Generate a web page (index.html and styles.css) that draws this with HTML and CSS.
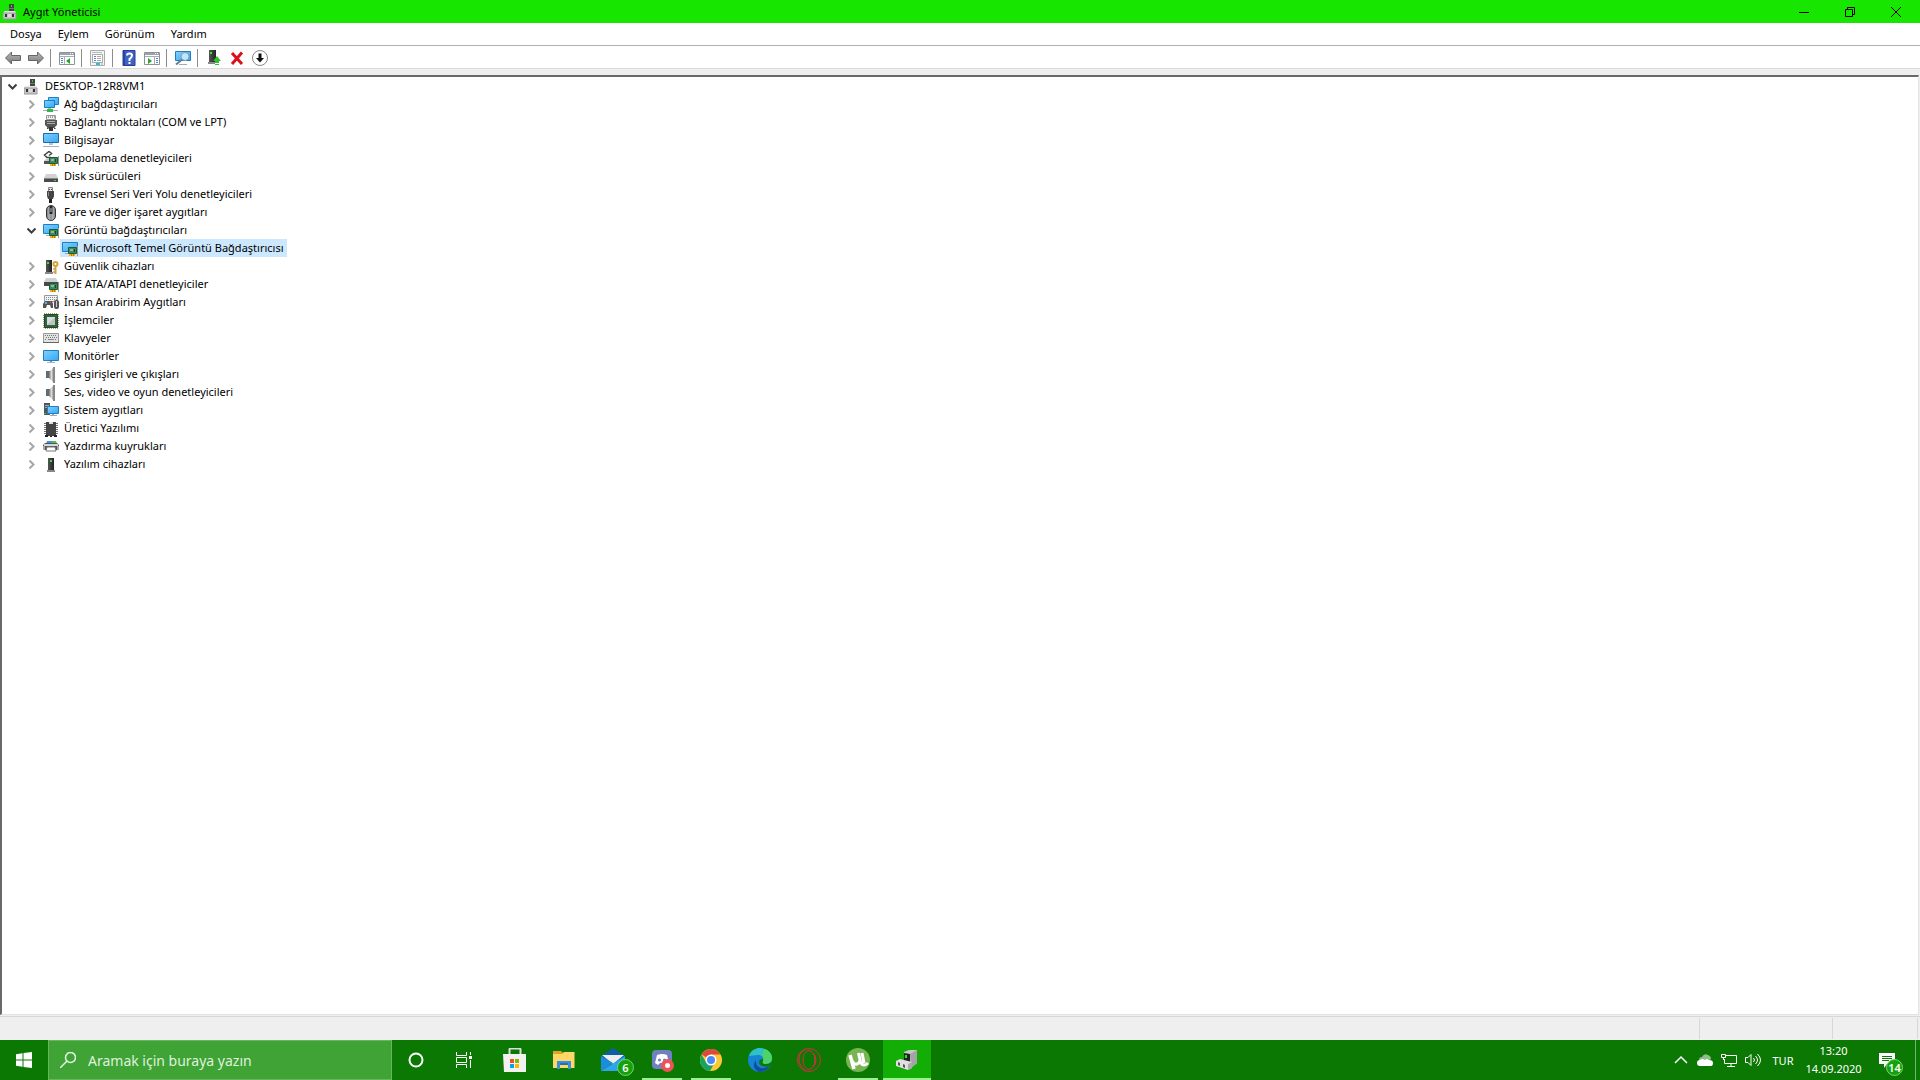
FILE: index.html
```html
<!DOCTYPE html>
<html lang="tr">
<head>
  <meta charset="UTF-8">
  <title>Aygıt Yöneticisi</title>
  <link rel="stylesheet" href="styles.css">
</head>
<body>

  <!-- shared icons -->
  <svg class="sprite" aria-hidden="true">
    <defs>
      <linearGradient id="screen" x1="0" y1="0" x2="1" y2="1"><stop offset="0" stop-color="#7fd0ff"/><stop offset="1" stop-color="#35a8f5"/></linearGradient>
      <linearGradient id="metal" x1="0" y1="0" x2="1" y2="0"><stop offset="0" stop-color="#777"/><stop offset=".5" stop-color="#ddd"/><stop offset="1" stop-color="#777"/></linearGradient>
      <linearGradient id="arrow" x1="0" y1="0" x2="0" y2="1"><stop offset="0" stop-color="#bbb"/><stop offset="1" stop-color="#777"/></linearGradient>
      <linearGradient id="dark" x1="0" y1="0" x2="1" y2="0"><stop offset="0" stop-color="#555"/><stop offset="1" stop-color="#222"/></linearGradient>
    </defs>
    <symbol id="i-devmgr" viewBox="0 0 16 16">
      <path d="M6 0h5v8H6z" fill="#444"/><path d="M8 1h1v2H8z" fill="#2ad42a"/><path d="M6 4h5v1H6z" fill="#777"/>
      <path d="M2 7h10l1 2v6H0V9z" fill="#c4c4c4"/><path d="M2 7h10l1 2H0z" fill="#e6e6e6"/><path d="M0 9h13v6H0z" fill="none" stroke="#999"/>
      <path d="M2 10h2v3H2zM9 10h2v3H9z" fill="#333"/><path d="M5 10h3v3H5z" fill="#ddd"/>
    </symbol>
    <symbol id="i-card" viewBox="0 0 16 16">
      <path d="M6.500 6.500h8v6h-8z" fill="#3c8a5c" stroke="#1f5a38"/><path d="M8 8h3v2H8z" fill="#8fb8a0"/><path d="M12 8h1v3h-1z" fill="#1c3f2a"/>
      <path d="M7 13h6v2H7z" fill="#f2b01e"/><path d="M9.500 13v2M11.500 13v2" stroke="#c07c00"/><path d="M15.500 5v10" stroke="#999"/>
    </symbol>
    <symbol id="i-network" viewBox="0 0 16 16">
      <path d="M5.500 .5h10v7h-10z" fill="url(#screen)" stroke="#1c7fc4"/><path d="M1.500 3.500h10v7h-10z" fill="url(#screen)" stroke="#1c7fc4"/>
      <path d="M5 11h3v2H5z" fill="#8ed48e"/><path d="M0 13h15v1H0z" fill="#aaa"/><path d="M4 12h6v3H4z" fill="#35b44a"/>
    </symbol>
    <symbol id="i-port" viewBox="0 0 16 16">
      <path d="M3.500 .5h9v4h-9z" fill="#eee" stroke="#999"/><path d="M5 2h1M7 2h1M9 2h1M11 2h1" stroke="#555"/>
      <path d="M2 5h12v5l-3 3H5l-3-3z" fill="#555"/><path d="M4 6.500h8M4 8.500h8" stroke="#aaa"/><path d="M6 12h4v4H6z" fill="#333"/><path d="M4 13h1v1M11 13h1v1" stroke="#333"/>
    </symbol>
    <symbol id="i-computer" viewBox="0 0 16 16">
      <path d="M.5 .5h15v9H.5z" fill="url(#screen)" stroke="#1c6ea8"/><path d="M6 10h4v2H6z" fill="#b7c4cd"/><path d="M0 13h16v1H0z" fill="#9fb2c0"/>
    </symbol>
    <symbol id="i-storage" viewBox="0 0 16 16">
      <path d="M6 .5L1.500 4 4 6.500h4M6 .5l2.500 2L6 4.500" fill="none" stroke="#444" stroke-width="1.500"/><path d="M1 10h6v3H1z" fill="#555"/><path d="M1 10l2-2h5v2z" fill="#c6c6c6"/><use href="#i-card"/>
    </symbol>
    <symbol id="i-disk" viewBox="0 0 16 16">
      <path d="M3 5h10l2 4H1z" fill="#d2d2d2"/><path d="M1 9h14v4H1z" fill="#4a4a4a"/><path d="M1 9h14v1H1z" fill="#888"/><path d="M11 11h2v1h-2z" fill="#38e438"/>
    </symbol>
    <symbol id="i-usb" viewBox="0 0 16 16">
      <path d="M5.500 .5h4v4h-4z" fill="#e4e4e4" stroke="#888"/><path d="M6 2h1v1H6zM8 2h1v1H8z" fill="#444"/><path d="M4 4h7v5l-1 3H5L4 9z" fill="#444"/><path d="M5 5h1v4H5z" fill="#888"/><path d="M6 12h3v4H6z" fill="#222"/>
    </symbol>
    <symbol id="i-mouse" viewBox="0 0 16 16">
      <rect x="3.500" y=".5" width="9" height="15" rx="4.500" fill="url(#metal)" stroke="#333"/><path d="M8 1v8" stroke="#222" stroke-width="3"/><path d="M8 3v4" stroke="#a9bfd5"/><path d="M8 9v6" stroke="#8e99a3" stroke-width="3"/>
    </symbol>
    <symbol id="i-display" viewBox="0 0 16 16">
      <path d="M.5 1.500h15v9H.5z" fill="url(#screen)" stroke="#1c7fc4"/><path d="M3 12h4v1H3z" fill="#aaa"/><use href="#i-card"/>
    </symbol>
    <symbol id="i-security" viewBox="0 0 16 16">
      <path d="M3 1h6v12H3z" fill="url(#dark)"/><path d="M4 3h2v2H4z" fill="#36e536"/><path d="M2 13h8v2H2z" fill="#888"/>
      <circle cx="12.500" cy="5" r="2" fill="none" stroke="#d6a23b" stroke-width="2"/><path d="M12.500 7v8" stroke="#d6a23b" stroke-width="2"/><path d="M10 10h2M10 13h2" stroke="#b88022"/>
    </symbol>
    <symbol id="i-ide" viewBox="0 0 16 16">
      <path d="M3 1h10l2 4H1z" fill="#d0d0d0"/><path d="M1 5h14v4H1z" fill="#4a4a4a"/><use href="#i-card"/>
    </symbol>
    <symbol id="i-hid" viewBox="0 0 16 16">
      <path d="M1.500 .5h13v6h-13z" fill="#f2f2f2" stroke="#999"/><path d="M3 2.500h11M3 4.500h11" stroke="#888" stroke-dasharray="1 1"/>
      <path d="M2 6h7l1 3v4H8l-1-3H4l-1 3H0V9z" fill="#555"/><path d="M2 7h2v2H2z" fill="#55aef0"/><path d="M7 7h1v1H7z" fill="#f55"/><rect x="11" y="5" width="5" height="9" rx="2" fill="#555"/><path d="M13.500 6v6" stroke="#ccc"/>
    </symbol>
    <symbol id="i-cpu" viewBox="0 0 16 16">
      <path d="M1 1h14v14H1z" fill="none" stroke="#b49a4a" stroke-width="2" stroke-dasharray="1 1"/><path d="M1.500 1.500h13v13h-13z" fill="#2f6145" stroke="#1f4931"/><path d="M4 4h8v8H4z" fill="#d9ded9"/><path d="M4 12l8-8v8z" fill="#bcc4bc"/>
    </symbol>
    <symbol id="i-keyboard" viewBox="0 0 16 16">
      <path d="M.5 2.500h15v9H.5z" fill="#e2e2e2" stroke="#999"/><path d="M2 4.500h12M3 6.500h11M2 8.500h2M12 8.500h2" stroke="#777" stroke-dasharray="1 1"/><path d="M5 8.500h6" stroke="#888"/><path d="M0 11h16v1H0z" fill="#666"/>
    </symbol>
    <symbol id="i-monitor" viewBox="0 0 16 16">
      <path d="M.5 1.500h15v10H.5z" fill="url(#screen)" stroke="#1c7fc4"/><path d="M7 12h2v1H7z" fill="#888"/><path d="M4 13h8v1H4z" fill="#a8b6bf"/>
    </symbol>
    <symbol id="i-speaker" viewBox="0 0 16 16">
      <path d="M3 4h4v7H3z" fill="#5d6b77"/><path d="M6 5l5-5v16l-5-5z" fill="url(#metal)"/><path d="M10 0h2v16h-2z" fill="#888"/>
    </symbol>
    <symbol id="i-system" viewBox="0 0 16 16">
      <path d="M1 0h6v12H1z" fill="#555"/><path d="M2 2.500h4M2 4.500h2" stroke="#aaa"/><path d="M1 10h2v1H1z" fill="#3c3"/><path d="M4.500 3.500h11v7h-11z" fill="url(#screen)" stroke="#1c7fc4"/><path d="M9 11h2v1H9zM7 12h7v1H7z" fill="#9aaab5"/>
    </symbol>
    <symbol id="i-firmware" viewBox="0 0 16 16">
      <path d="M1 2.500h14M1 4.500h14M1 6.500h14M1 8.500h14M1 10.500h14M1 12.500h14" stroke="#777"/><path d="M3 1h10v14H3z" fill="#444"/><path d="M6 1h4v2H6z" fill="#ddd"/><path d="M2 14h3v2H2zM7 15h2v1H7zM11 14h3v2h-3z" fill="#222"/>
    </symbol>
    <symbol id="i-printer" viewBox="0 0 16 16">
      <path d="M4 2h9l1 3H3z" fill="#2d9ae0"/><path d="M9 2h4v2H9z" fill="#58bd45"/><path d="M2 4h12l2 2v5H0V6z" fill="#555"/><path d="M1 5h14v2H1z" fill="#d8d8d8"/><path d="M0 7h2v4H0zM14 7h2v4h-2z" fill="#aaa"/><path d="M4 8h8l1 4H3z" fill="#fff" stroke="#777"/>
    </symbol>
    <symbol id="i-software" viewBox="0 0 16 16">
      <path d="M5 1h6v12H5z" fill="url(#dark)"/><path d="M7 3h2v2H7z" fill="#36e536"/><path d="M4 13h8v2H4z" fill="#888"/>
    </symbol>
    <symbol id="i-chev" viewBox="0 0 9 9"><path d="M2.500 .5l4 4-4 4" fill="none" stroke="#a6a6a6" stroke-width="2"/></symbol>
    <symbol id="i-chev-open" viewBox="0 0 9 9"><path d="M.5 2.500l4 4 4-4" fill="none" stroke="#404040" stroke-width="2"/></symbol>
  </svg>

  <header class="titlebar">
    <svg class="icon"><use href="#i-devmgr"/></svg>
    <h1>Aygıt Yöneticisi</h1>
    <div class="controls">
      <button aria-label="Simge durumuna küçült"><svg width="10" height="10"><path d="M0 5.500h10" stroke="#000"/></svg></button>
      <button aria-label="Önceki boyut"><svg width="10" height="10"><path d="M.5 2.500h7v7h-7zM2.500 2V.5h7v7H8" fill="none" stroke="#000"/></svg></button>
      <button aria-label="Kapat"><svg width="10" height="10"><path d="M0 0l10 10M10 0L0 10" stroke="#000"/></svg></button>
    </div>
  </header>

  <nav class="menubar">
    <button>Dosya</button>
    <button>Eylem</button>
    <button>Görünüm</button>
    <button>Yardım</button>
  </nav>

  <div class="toolbar">
    <button aria-label="Geri"><svg class="icon" viewBox="0 0 16 16"><path d="M.5 8l6-6v3.500h9v5h-9V14z" fill="url(#arrow)" stroke="#666"/></svg></button>
    <button aria-label="İleri"><svg class="icon" viewBox="0 0 16 16"><path d="M15.500 8l-6-6v3.500h-9v5h9V14z" fill="url(#arrow)" stroke="#666"/></svg></button>
    <span class="sep"></span>
    <button aria-label="Konsol ağacını göster"><svg class="icon" viewBox="0 0 16 16"><path d="M.5 2.500h15v12H.5z" fill="#fff" stroke="#8b929a"/><path d="M1 3h14v2H1z" fill="#9aa3ad"/><path d="M11 3h1v1h-1zM13 3h1v1h-1z" fill="#fff"/><path d="M1 6.500h14M5.500 6v8" stroke="#aab"/><path d="M2 8.500h2M2 10.500h2M2 12.500h2" stroke="#478ac9"/><path d="M11 8v6l-4-3z" fill="#24a824"/></svg></button>
    <span class="sep"></span>
    <button aria-label="Özellikler"><svg class="icon" viewBox="0 0 16 16"><path d="M.5 .5h14v15H.5z" fill="#f4f4f4" stroke="#aaa"/><path d="M2 2.500h10" stroke="#bbb"/><path d="M2.500 4.500h10v8h-10z" fill="#fff" stroke="#aaa"/><path d="M4 6.500h2M4 8.500h2M4 10.500h2" stroke="#478ac9"/><path d="M7 6.500h4M7 8.500h4M7 10.500h4" stroke="#aaa"/><path d="M6 14h4" stroke="#29bce8" stroke-width="2"/><path d="M11 14h2" stroke="#aaa"/></svg></button>
    <span class="sep"></span>
    <button aria-label="Yardım konuları"><svg class="icon" viewBox="0 0 16 16"><path d="M2 .5h12v15H2z" fill="#3e63c4" stroke="#263f92"/><path d="M2 1h2v14H2z" fill="#27439e"/><path d="M6 5.500q0-2 2.500-2t2.500 2q0 1.500-2.500 3.500v2" fill="none" stroke="#fff" stroke-width="2"/><path d="M7.500 12h2v2h-2z" fill="#fff"/></svg></button>
    <button aria-label="Eylem bölmesi"><svg class="icon" viewBox="0 0 16 16"><path d="M.5 2.500h15v12H.5z" fill="#fff" stroke="#8b929a"/><path d="M1 3h14v2H1z" fill="#9aa3ad"/><path d="M11 3h1v1h-1zM13 3h1v1h-1z" fill="#fff"/><path d="M1 6.500h14M10.500 6v8" stroke="#aab"/><path d="M12 8.500h2M12 10.500h2M12 12.500h2" stroke="#478ac9"/><path d="M4 8v6l4-3z" fill="#24a824"/></svg></button>
    <span class="sep"></span>
    <button aria-label="Donanım değişikliklerini tara"><svg class="icon" viewBox="0 0 16 16"><path d="M.5 1.500h15v9H.5z" fill="url(#screen)" stroke="#1c7fc4"/><path d="M4 14h8v1H4z" fill="#9ab"/><circle cx="10" cy="6.500" r="4" fill="#bfe6ff" stroke="#8b9aa5"/><path d="M7 9.500l-6 5" stroke="#667f91" stroke-width="2"/></svg></button>
    <span class="sep"></span>
    <button aria-label="Sürücüyü güncelleştir"><svg class="icon" viewBox="0 0 16 16"><path d="M3 0h7v12H3z" fill="url(#dark)"/><path d="M4 2h2v2H4z" fill="#36e536"/><path d="M2 12h7v2H2z" fill="#888"/><path d="M11 6l4 5h-2v2H9v-2H7z" fill="#2cc02c"/><path d="M9 14h4v1H9z" fill="#2cc02c"/></svg></button>
    <button aria-label="Aygıtı kaldır"><svg class="icon" viewBox="0 0 16 16"><path d="M3 3l10 11M13 2.500L3 14" stroke="#dc0f1c" stroke-width="3"/></svg></button>
    <button aria-label="Aygıtı devre dışı bırak"><svg class="icon" viewBox="0 0 16 16"><circle cx="8" cy="8" r="7.500" fill="#fff" stroke="#888"/><path d="M6.500 3.500h3V8H12l-4 4.500L4 8h2.500z" fill="#111"/></svg></button>
  </div>

  <main class="content">
    <ul class="tree">
      <li>
        <div class="row"><button class="toggle" aria-label="Daralt"><svg><use href="#i-chev-open"/></svg></button><svg class="icon"><use href="#i-devmgr"/></svg><span>DESKTOP-12R8VM1</span></div>
        <ul>
          <li><div class="row"><button class="toggle" aria-label="Genişlet"><svg><use href="#i-chev"/></svg></button><svg class="icon"><use href="#i-network"/></svg><span>Ağ bağdaştırıcıları</span></div></li>
          <li><div class="row"><button class="toggle" aria-label="Genişlet"><svg><use href="#i-chev"/></svg></button><svg class="icon"><use href="#i-port"/></svg><span>Bağlantı noktaları (COM ve LPT)</span></div></li>
          <li><div class="row"><button class="toggle" aria-label="Genişlet"><svg><use href="#i-chev"/></svg></button><svg class="icon"><use href="#i-computer"/></svg><span>Bilgisayar</span></div></li>
          <li><div class="row"><button class="toggle" aria-label="Genişlet"><svg><use href="#i-chev"/></svg></button><svg class="icon"><use href="#i-storage"/></svg><span>Depolama denetleyicileri</span></div></li>
          <li><div class="row"><button class="toggle" aria-label="Genişlet"><svg><use href="#i-chev"/></svg></button><svg class="icon"><use href="#i-disk"/></svg><span>Disk sürücüleri</span></div></li>
          <li><div class="row"><button class="toggle" aria-label="Genişlet"><svg><use href="#i-chev"/></svg></button><svg class="icon"><use href="#i-usb"/></svg><span>Evrensel Seri Veri Yolu denetleyicileri</span></div></li>
          <li><div class="row"><button class="toggle" aria-label="Genişlet"><svg><use href="#i-chev"/></svg></button><svg class="icon"><use href="#i-mouse"/></svg><span>Fare ve diğer işaret aygıtları</span></div></li>
          <li>
            <div class="row"><button class="toggle" aria-label="Daralt"><svg><use href="#i-chev-open"/></svg></button><svg class="icon"><use href="#i-display"/></svg><span>Görüntü bağdaştırıcıları</span></div>
            <ul>
              <li><div class="row leaf selected"><svg class="icon"><use href="#i-display"/></svg><span>Microsoft Temel Görüntü Bağdaştırıcısı</span></div></li>
            </ul>
          </li>
          <li><div class="row"><button class="toggle" aria-label="Genişlet"><svg><use href="#i-chev"/></svg></button><svg class="icon"><use href="#i-security"/></svg><span>Güvenlik cihazları</span></div></li>
          <li><div class="row"><button class="toggle" aria-label="Genişlet"><svg><use href="#i-chev"/></svg></button><svg class="icon"><use href="#i-ide"/></svg><span>IDE ATA/ATAPI denetleyiciler</span></div></li>
          <li><div class="row"><button class="toggle" aria-label="Genişlet"><svg><use href="#i-chev"/></svg></button><svg class="icon"><use href="#i-hid"/></svg><span>İnsan Arabirim Aygıtları</span></div></li>
          <li><div class="row"><button class="toggle" aria-label="Genişlet"><svg><use href="#i-chev"/></svg></button><svg class="icon"><use href="#i-cpu"/></svg><span>İşlemciler</span></div></li>
          <li><div class="row"><button class="toggle" aria-label="Genişlet"><svg><use href="#i-chev"/></svg></button><svg class="icon"><use href="#i-keyboard"/></svg><span>Klavyeler</span></div></li>
          <li><div class="row"><button class="toggle" aria-label="Genişlet"><svg><use href="#i-chev"/></svg></button><svg class="icon"><use href="#i-monitor"/></svg><span>Monitörler</span></div></li>
          <li><div class="row"><button class="toggle" aria-label="Genişlet"><svg><use href="#i-chev"/></svg></button><svg class="icon"><use href="#i-speaker"/></svg><span>Ses girişleri ve çıkışları</span></div></li>
          <li><div class="row"><button class="toggle" aria-label="Genişlet"><svg><use href="#i-chev"/></svg></button><svg class="icon"><use href="#i-speaker"/></svg><span>Ses, video ve oyun denetleyicileri</span></div></li>
          <li><div class="row"><button class="toggle" aria-label="Genişlet"><svg><use href="#i-chev"/></svg></button><svg class="icon"><use href="#i-system"/></svg><span>Sistem aygıtları</span></div></li>
          <li><div class="row"><button class="toggle" aria-label="Genişlet"><svg><use href="#i-chev"/></svg></button><svg class="icon"><use href="#i-firmware"/></svg><span>Üretici Yazılımı</span></div></li>
          <li><div class="row"><button class="toggle" aria-label="Genişlet"><svg><use href="#i-chev"/></svg></button><svg class="icon"><use href="#i-printer"/></svg><span>Yazdırma kuyrukları</span></div></li>
          <li><div class="row"><button class="toggle" aria-label="Genişlet"><svg><use href="#i-chev"/></svg></button><svg class="icon"><use href="#i-software"/></svg><span>Yazılım cihazları</span></div></li>
        </ul>
      </li>
    </ul>
  </main>

  <div class="statusbar">
    <span class="pane"></span>
    <span class="pane medium"></span>
    <span class="pane small"></span>
  </div>

  <footer class="taskbar">
    <button class="task" aria-label="Başlat"><svg width="16" height="16"><path d="M0 2.300L6.500 1.300v6.200H0zM7.500 1.100L16 0v7.500H7.500zM0 8.500h6.500v6.200L0 13.700zM7.500 8.500H16V16l-8.500-1.100z" fill="#fff"/></svg></button>
    <label class="search">
      <svg width="16" height="16"><circle cx="10.500" cy="5.500" r="5" fill="none" stroke="#e4f5e2" stroke-width="1.500"/><path d="M7 9L0 16" stroke="#e4f5e2" stroke-width="1.500"/></svg>
      <input type="text" placeholder="Aramak için buraya yazın" aria-label="Ara">
    </label>
    <button class="task" aria-label="Cortana"><svg width="16" height="16"><circle cx="8" cy="8" r="6.500" fill="none" stroke="#fff" stroke-width="2"/></svg></button>
    <button class="task" aria-label="Görev Görünümü"><svg width="16" height="16"><path d="M.5 0v3.500h10V0M.5 16v-3.500h10V16M.5 5.500h10v5H.5zM14.500 0v3M14.500 8v8" fill="none" stroke="#fff"/><path d="M13 4h3v3h-3z" fill="#fff"/></svg></button>

    <div class="apps">
      <button class="task" aria-label="Microsoft Store"><svg width="24" height="24"><path d="M6.500 7V1.500q0-1 1-1h9q1 0 1 1V7" fill="none" stroke="#ddd" stroke-width="2"/><path d="M0 6h23v18H1z" fill="#f1f1f1"/><path d="M7 11h4v4H7z" fill="#f25022"/><path d="M12 11h4v4h-4z" fill="#7fba00"/><path d="M7 16h4v4H7z" fill="#00a4ef"/><path d="M12 16h4v4h-4z" fill="#ffb900"/></svg></button>
      <button class="task" aria-label="Dosya Gezgini"><svg width="24" height="24"><path d="M1 3h8l2 2h11v14H1z" fill="#e9a01c"/><path d="M1 6h9l2-2h10.500v16H1z" fill="#ffd766"/><path d="M5 13h14v8h-3v-4H8v4H5z" fill="#3b8ede"/><path d="M8 15h8v2H8z" fill="#1f6fc0"/></svg></button>
      <button class="task" aria-label="Posta"><svg width="24" height="24"><path d="M0 8l12-8 12 8v4H0z" fill="#0f5ea8"/><path d="M1 7h22l-11 9z" fill="#eee"/><path d="M0 8l12 7-12 8z" fill="#1b8ddd"/><path d="M24 8L0 23h24z" fill="#2fa4ee"/></svg><span class="badge">6</span></button>
      <button class="task running" aria-label="Discord"><svg width="24" height="24"><rect x="2" y="2" width="20" height="19" rx="4" fill="#7180c0"/><path d="M7 7q5-2 10 0l2 8-3 2-2-2h-4l-2 2-3-2z" fill="#fff"/><circle cx="9.500" cy="12" r="1.500" fill="#7180c0"/><circle cx="14.500" cy="12" r="1.500" fill="#7180c0"/><circle cx="17.500" cy="17.500" r="6.500" fill="#ee5357"/><circle cx="17.500" cy="17.500" r="2.500" fill="#fff"/></svg></button>
      <button class="task running" aria-label="Chrome"><svg width="24" height="24"><circle cx="12" cy="12" r="11" fill="#fcc934"/><path d="M12 12L2.500 6.500A11 11 0 0 1 21.500 6.500H12z" fill="#dc4a3d"/><path d="M2.500 6.500A11 11 0 0 0 11 23l5-9-4 3-5-3z" fill="#1aa260"/><circle cx="12" cy="12" r="5.500" fill="#fff"/><circle cx="12" cy="12" r="4" fill="#4c8bf5"/></svg></button>
      <button class="task" aria-label="Edge"><svg width="24" height="24"><circle cx="12" cy="12" r="12" fill="#1584d4"/><path d="M1 8C3 2 8 0 12 0c7 0 12 5 12 10 0 4-3 6-6 6-4 0-4-2-3-3 2-3-1-6-5-6C6 7 3 8 1 8z" fill="#2fc0c8"/><path d="M16 1c5 1 8 5 8 9 0 4-3 6-6 6-4 0-4-2-3-3 1-2 0-4-1-5z" fill="#4ed26a"/><path d="M8 12c-1 5 3 9 8 8l6-2c-3 5-8 6-11 6-5-2-7-7-3-12z" fill="#0f4f9c"/><path d="M15 13c-1 1-1 3 3 3 3 0 5-1 6-3v3l-2 2c-5 2-11 0-11-4 0-2 2-3 4-3z" fill="#0c7804"/></svg></button>
      <button class="task" aria-label="Opera"><svg width="24" height="24"><circle cx="12" cy="12" r="11.500" fill="none" stroke="#d82c41"/><ellipse cx="12" cy="12" rx="6" ry="9.500" fill="none" stroke="#d82c41"/><path d="M9 1Q1 5 2 12t7 11M15 4q4 3 4 8t-4 8" fill="none" stroke="#d82c41"/></svg></button>
      <button class="task running" aria-label="µTorrent"><svg width="24" height="24"><circle cx="12" cy="12" r="12" fill="#78b451"/><path d="M4 7l4 14" stroke="#fff" stroke-width="3.500"/><path d="M6 13q2 4 5 3t3-4L12.500 5M14 12q1 5 4 5 2 0 4-2M18 15L16 5" fill="none" stroke="#fff" stroke-width="3"/></svg></button>
      <button class="task running active" aria-label="Aygıt Yöneticisi"><svg width="24" height="24"><path d="M9 4l5-2h8v13l-6 5-7-5z" fill="#c8c8c8"/><path d="M15 6l7-4v13l-6 5z" fill="#a4a4a4"/><path d="M9 5l6 1v9l-6-2z" fill="#222"/><path d="M10 7h2v3h-2z" fill="#3d3"/><path d="M1 13l4-2 12 3v6l-4 2-12-4z" fill="#e0e0e0"/><path d="M13 16l4-2v6l-4 2z" fill="#aaa"/><path d="M3 14l2 1v3l-2-1zM8 16l2 1v3l-2-1z" fill="#555"/></svg></button>
    </div>

    <div class="tray">
      <button aria-label="Gizli simgeler"><svg width="16" height="16"><path d="M2 11l6-6 6 6" fill="none" stroke="#fff" stroke-width="1.500"/></svg></button>
      <button aria-label="OneDrive"><svg width="16" height="16"><path d="M2 8q0-3 3-3 2-4 6-2 3 1 3 4l-5 3z" fill="#8fbd8c"/><path d="M3 14q-3 0-3-3t3-3q2-2 5 0 2-2 4 0 4 0 4 3t-2 3z" fill="#fff"/></svg></button>
      <button aria-label="Ağ"><svg width="16" height="16"><path d="M5 3.500h10.500v8H3.500V7M10 12v3M6 14.500h8M.5 2.500h4v3h-4zM2.500 5v3" fill="none" stroke="#fff"/></svg></button>
      <button aria-label="Ses"><svg width="16" height="16"><path d="M.5 5.500H3l3-3v11l-3-3H.5zM8.500 6q2 2 0 4M10.500 4q4 4 0 8M12.500 2q6 6 0 12" fill="none" stroke="#fff"/></svg></button>
      <button class="lang">TUR</button>
      <button class="clock"><time>13:20</time><time>14.09.2020</time></button>
      <button class="task notify" aria-label="Bildirimler"><svg width="16" height="16"><path d="M0 1h16v11H8l-3 4v-4H0z" fill="#fff"/><path d="M3 4.500h10M3 6.500h10M3 8.500h7" stroke="#0c7804"/></svg><span class="badge">14</span></button>
      <button class="show-desktop" aria-label="Masaüstünü göster"></button>
    </div>
  </footer>

</body>
</html>
```
FILE: styles.css
```css
* {
  box-sizing: border-box;
}

body {
  display: flex;
  flex-direction: column;
  height: 100vh;
  margin: 0;
  overflow: hidden;
  background: #efefef;
  color: #000;
  font-family: "Noto Sans", "Open Sans", sans-serif;
  font-size: 11px;
}

button {
  display: flex;
  align-items: center;
  justify-content: center;
  padding: 0;
  border: 0;
  background: none;
  color: inherit;
  font: inherit;
}

svg {
  display: block;
  flex: none;
}

.sprite {
  position: absolute;
  width: 0;
  height: 0;
}

.icon {
  width: 16px;
  height: 16px;
}

/* title bar */
.titlebar {
  display: flex;
  align-items: center;
  gap: 4px;
  height: 23px;
  padding-left: 3px;
  background: #16e600;
}

.titlebar h1 {
  margin: 0;
  font-size: 11px;
  font-weight: normal;
}

.controls {
  display: flex;
  margin-left: auto;
  padding-right: 1px;
}

.controls button {
  width: 46px;
  height: 20px;
}

/* menu and tool bar */
.menubar {
  display: flex;
  height: 23px;
  padding: 0 0 2px 2px;
  background: #fff;
  border-bottom: 1px solid #b0b0b4;
}

.menubar button {
  padding: 0 8px;
}

.toolbar {
  display: flex;
  align-items: center;
  height: 23px;
  padding: 2px 0 0 1px;
  background: #fff;
  border-bottom: 1px solid #dadada;
}

.toolbar button {
  width: 23px;
  height: 20px;
}

.sep {
  width: 1px;
  height: 18px;
  margin: 0 4px 0 3px;
  background: #8d8d8d;
}

/* device tree */
.content {
  flex: 1;
  min-height: 0;
  margin: 6px 1px 1px 0;
  background: #fff;
  border: 1px solid #e3e3e3;
  border-top: 2px solid #696969;
  border-left: 2px solid #696969;
  overflow: hidden;
}

.tree,
.tree ul {
  margin: 0;
  padding: 0;
  list-style: none;
}

.tree {
  padding-left: 1px;
}

.tree ul {
  padding-left: 19px;
}

.row {
  display: flex;
  align-items: center;
  width: max-content;
  height: 18px;
}

.row .icon {
  margin-top: 2px;
}

.row span {
  padding: 0 3px 2px 5px;
}

.toggle {
  width: 19px;
  height: 18px;
  margin-right: 2px;
}

.toggle svg {
  width: 9px;
  height: 9px;
}

.leaf {
  margin-left: 19px;
  padding-left: 2px;
}

.selected {
  background: #cce8ff;
}

/* status bar */
.statusbar {
  display: flex;
  height: 24px;
  padding: 1px 2px 1px 0;
  border-top: 1px solid #d7d7d7;
}

.pane {
  flex: 1;
  border-right: 1px solid #d7d7d7;
}

.medium {
  flex: 0 0 133px;
}

.small {
  flex: 0 0 85px;
}

/* taskbar */
.taskbar {
  display: flex;
  height: 40px;
  background: #0c7804;
  color: #fff;
}

.task {
  position: relative;
  width: 48px;
  height: 40px;
}

.search {
  display: flex;
  align-items: center;
  gap: 12px;
  width: 344px;
  padding-left: 11px;
  background: #40a336;
  border: 1px solid #65b65d;
}

.search input {
  flex: 1;
  min-width: 0;
  padding: 0;
  border: 0;
  outline: 0;
  background: none;
  color: #fff;
  font-family: inherit;
  font-size: 14px;
}

.search input::placeholder {
  color: #dff2dd;
  opacity: 1;
}

.apps {
  display: flex;
  gap: 1px;
  margin-left: 3px;
}

.running::after {
  content: "";
  position: absolute;
  right: 4px;
  bottom: 0;
  left: 4px;
  height: 2px;
  background: #9df094;
}

.active {
  background: #12ad05;
}

.active::after {
  right: 0;
  left: 0;
}

.badge {
  position: absolute;
  right: 3px;
  bottom: 4px;
  width: 17px;
  height: 17px;
  border: 1px solid #7fd078;
  border-radius: 50%;
  background: #12a30a;
  font-size: 11px;
  font-weight: 600;
  line-height: 15px;
  text-align: center;
}

.tray {
  display: flex;
  margin-left: auto;
}

.tray button {
  min-width: 24px;
}

.tray .lang {
  width: 36px;
}

.tray .clock {
  flex-direction: column;
  width: 65px;
  line-height: 18px;
}

.notify {
  margin-right: 1px;
  padding-right: 6px;
}

.notify .badge {
  right: 11px;
}

.tray .show-desktop {
  min-width: 5px;
  border-left: 1px solid #6fb56a;
}
```
